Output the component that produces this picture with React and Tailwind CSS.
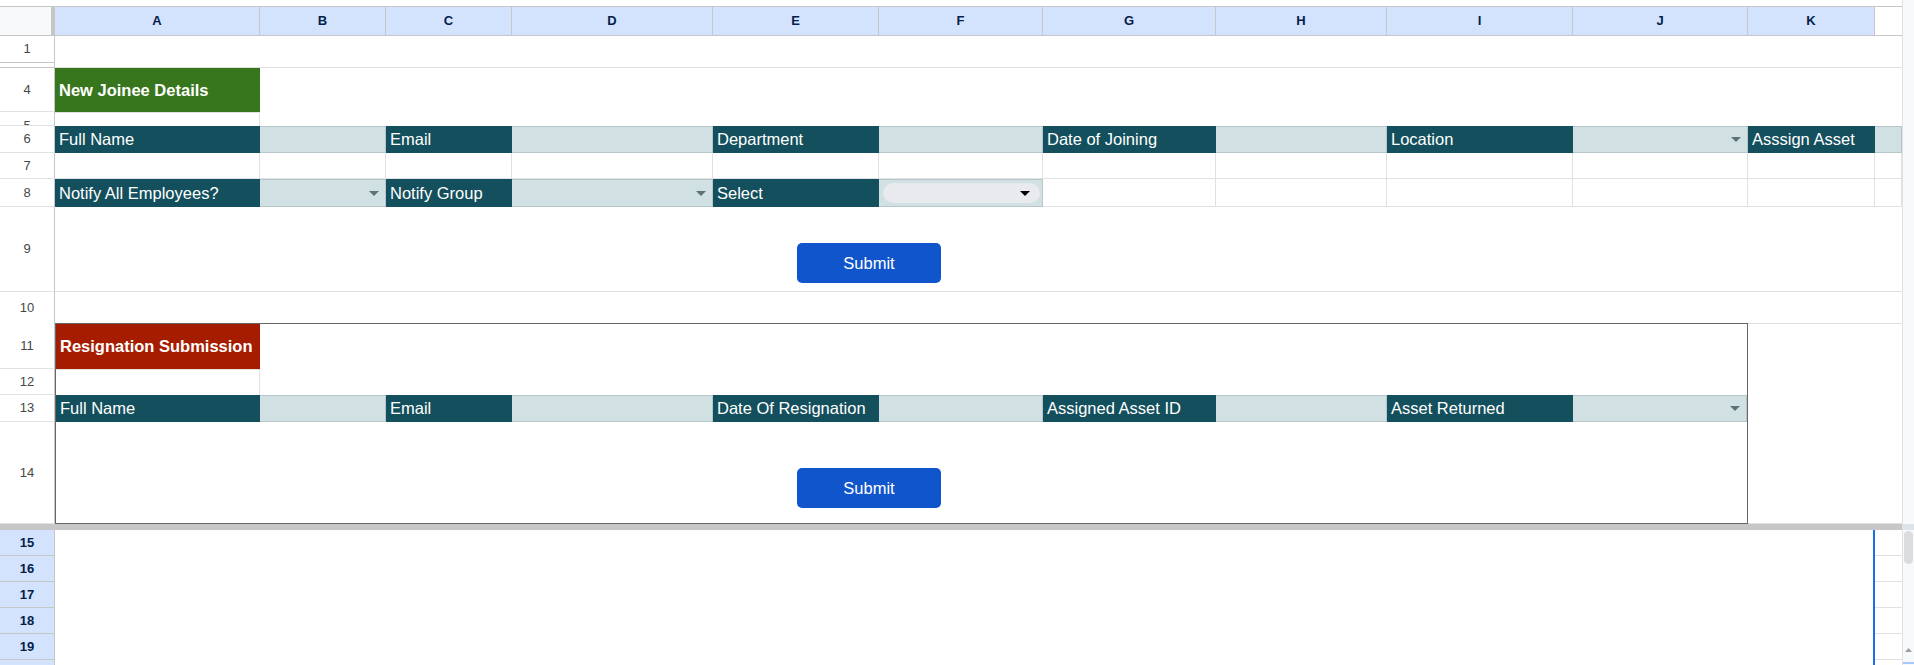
import React from 'react';

const LETTERS = ['A', 'B', 'C', 'D', 'E', 'F', 'G', 'H', 'I', 'J', 'K'];

function Caret({ color = '#5b7378' }) {
  return (
    <svg width="10" height="5" viewBox="0 0 10 5">
      <path d="M0 0h10L5 5z" fill={color} />
    </svg>
  );
}

function RowNum({ n }) {
  return (
    <div className="col-start-1 flex items-center justify-center border-r border-b border-[#e1e1e1] border-r-[#c4c7c5] text-[13px] text-[#444746]">
      {n}
    </div>
  );
}

function SelRowNum({ n }) {
  return (
    <div className="col-start-1 flex items-center justify-center border-r border-b border-[#c4c7c5] bg-[#d3e3fd] text-[13px] font-bold text-[#041e49]">
      {n}
    </div>
  );
}

function Label({ children, bold }) {
  return (
    <div
      className={
        bold
          ? 'flex items-center overflow-hidden whitespace-nowrap pl-[4px] text-[16.5px] font-bold text-white'
          : 'flex items-center overflow-hidden whitespace-nowrap bg-[#134f5c] pl-[4px] text-[16.5px] text-white'
      }
    >
      {children}
    </div>
  );
}

function Field({ dropdown }) {
  return (
    <div className="flex items-center justify-end border-y border-r border-[#b6c6c9] bg-[#d0e0e3] pr-[6px]">
      {dropdown && <Caret />}
    </div>
  );
}

function Blank() {
  return <div className="border-r border-b border-[#e1e1e1]" />;
}

function SubmitButton() {
  return (
    <button className="flex h-[40px] w-[144px] items-center justify-center rounded-[5px] bg-[#1155cc] text-[16.5px] text-white">
      Submit
    </button>
  );
}

function ScrollColumn() {
  return (
    <div className="flex w-[12px] flex-col">
      <div className="h-[524px] border-l border-[#e1e1e1] bg-[#f8f9fa]" />
      <div className="h-[6px] bg-[#dde3ea]" />
      <div className="flex flex-1 flex-col items-center border-l border-[#e1e1e1] bg-[#f8f9fa]">
        <div className="mt-[1px] h-[33px] w-[9px] rounded-full bg-[#dadce0]" />
        <svg className="mt-[84px]" width="7" height="4" viewBox="0 0 7 4">
          <path d="M0 4h7L3.5 0z" fill="#9aa0a6" />
        </svg>
        <div className="mt-auto h-[3px] w-full border-t-2 border-[#a8c7fa]" />
      </div>
    </div>
  );
}

export default function App() {
  return (
    <div className="flex h-[665px] w-[1914px] overflow-hidden bg-white font-['Liberation_Sans',Arial,sans-serif]">
      <div className="grid h-[665px] w-[1902px] grid-cols-[55px_205px_126px_126px_201px_166px_164px_173px_171px_186px_175px_127px_27px] grid-rows-[6px_30px_26px_6px_44px_14px_27px_26px_28px_85px_31px_46px_26px_27px_102px_6px_26px_26px_26px_26px_26px_5px]">
        {/* top gap */}
        <div className="col-span-13" />

        {/* column headers */}
        <div className="border-y border-r-4 border-[#c4c7c5] bg-[#f8f9fa]" />
        {LETTERS.map((l) => (
          <div
            key={l}
            className="flex items-center justify-center border-y border-r border-[#c4c7c5] bg-[#d3e3fd] text-[13px] font-bold text-[#041e49]"
          >
            {l}
          </div>
        ))}
        <div className="border-y border-[#c4c7c5] bg-white" />

        {/* row 1 + hidden rows 2-3 */}
        <div className="col-start-1 flex items-center justify-center border-r border-[#c4c7c5] text-[13px] text-[#444746]">1</div>
        <div className="col-span-12" />
        <div className="col-start-1 border-y border-r border-[#c4c7c5]" />
        <div className="col-span-12 border-b border-[#e1e1e1]" />

        {/* row 4 */}
        <RowNum n="4" />
        <div className="flex items-center bg-[#38761d] pl-[4px] text-[16.5px] font-bold text-white">New Joinee Details</div>
        <div className="col-span-11 row-span-2" />

        {/* row 5 */}
        <div className="col-start-1 overflow-hidden border-r border-b border-[#e1e1e1] border-r-[#c4c7c5] pt-[6px] text-center text-[13px] leading-[15px] text-[#444746]">5</div>
        <div className="border-t border-r border-[#e1e1e1]" />

        {/* row 6 */}
        <RowNum n="6" />
        <Label>Full Name</Label>
        <Field />
        <Label>Email</Label>
        <Field />
        <Label>Department</Label>
        <Field />
        <Label>Date of Joining</Label>
        <Field />
        <Label>Location</Label>
        <Field dropdown />
        <Label>Asssign Asset</Label>
        <Field />

        {/* row 7 */}
        <RowNum n="7" />
        {Array.from({ length: 12 }).map((_, i) => (
          <Blank key={i} />
        ))}

        {/* row 8 */}
        <RowNum n="8" />
        <Label>Notify All Employees?</Label>
        <Field dropdown />
        <Label>Notify Group</Label>
        <Field dropdown />
        <Label>Select</Label>
        <div className="flex items-center border-y border-r border-[#b6c6c9] bg-[#d0e0e3] pl-[4px] pr-[2px]">
          <div className="flex h-[20px] flex-1 items-center justify-end rounded-full bg-[#e8eaed] pr-[10px]">
            <Caret color="#000000" />
          </div>
        </div>
        {Array.from({ length: 6 }).map((_, i) => (
          <Blank key={i} />
        ))}

        {/* row 9 */}
        <RowNum n="9" />
        <div className="col-span-12 border-b border-[#e1e1e1] pl-[742px] pt-[36px]">
          <SubmitButton />
        </div>

        {/* row 10 */}
        <div className="col-start-1 flex items-center justify-center border-r border-[#c4c7c5] text-[13px] text-[#444746]">10</div>
        <div className="col-span-12" />

        {/* rows 11-14: resignation block */}
        <RowNum n="11" />
        <div className="col-span-10 row-span-4 grid grid-cols-[204px_126px_126px_201px_166px_164px_173px_171px_186px_174px] grid-rows-[45px_26px_27px_101px] border border-[#666666]">
          <div className="flex items-center bg-[#a61c00] pl-[4px] text-[16.5px] font-bold text-white">Resignation Submission</div>
          <div className="col-span-9 row-span-2" />
          <div className="border-t border-r border-[#e1e1e1]" />
          <Label>Full Name</Label>
          <Field />
          <Label>Email</Label>
          <Field />
          <Label>Date Of Resignation</Label>
          <Field />
          <Label>Assigned Asset ID</Label>
          <Field />
          <Label>Asset Returned</Label>
          <Field dropdown />
          <div className="col-span-10 pl-[741px] pt-[46px]">
            <SubmitButton />
          </div>
        </div>
        <div className="col-span-2 row-span-4 border-y border-[#e1e1e1]" />
        <RowNum n="12" />
        <RowNum n="13" />
        <RowNum n="14" />

        {/* frozen divider */}
        <div className="col-span-13 bg-[#c7c7c7]" />

        {/* rows 15-20 */}
        <SelRowNum n="15" />
        <div className="col-span-11 row-span-6 border-r-2 border-[#1a6ee8]" />
        <div className="border-b border-[#e1e1e1]" />
        <SelRowNum n="16" />
        <div className="border-b border-[#e1e1e1]" />
        <SelRowNum n="17" />
        <div className="border-b border-[#e1e1e1]" />
        <SelRowNum n="18" />
        <div className="border-b border-[#e1e1e1]" />
        <SelRowNum n="19" />
        <div className="border-b border-[#e1e1e1]" />
        <div className="col-start-1 border-r border-[#c4c7c5] bg-[#d3e3fd]" />
        <div />
      </div>
      <ScrollColumn />
    </div>
  );
}
